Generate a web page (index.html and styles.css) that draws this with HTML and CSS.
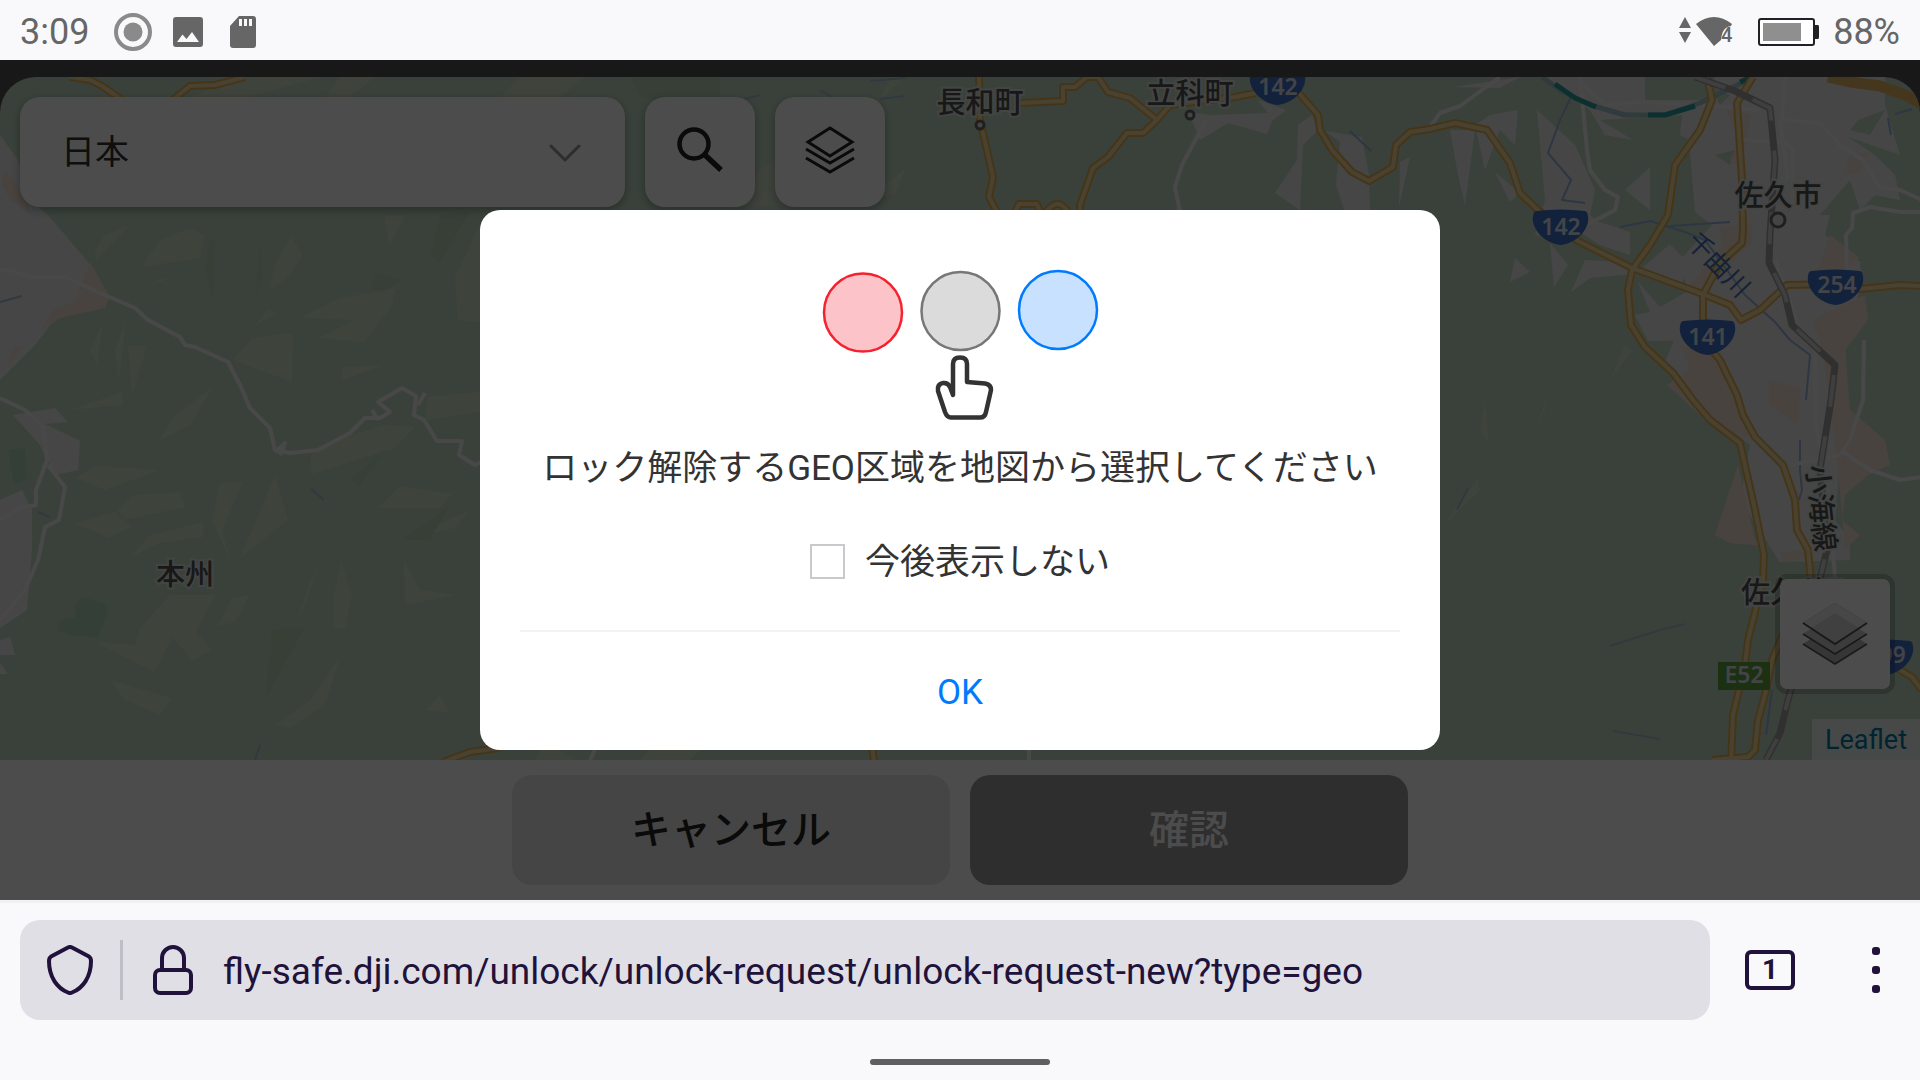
FILE: index.html
```html
<!DOCTYPE html>
<html lang="ja">
<head>
    <meta charset="UTF-8">
    <meta name="viewport" content="width=device-width, initial-scale=1.0">
    <title>GEO区域のロック解除</title>
    <link rel="stylesheet" href="styles.css">
</head>
<body>
    <!-- Status bar -->
    <header class="status-bar">
        <div class="status-left">
            <span class="clock">3:09</span>
            <svg class="icon-record" width="38" height="38" viewBox="0 0 38 38">
                <circle cx="19" cy="19" r="17" fill="none" stroke="#8a8a8a" stroke-width="4"/>
                <circle cx="19" cy="19" r="9.5" fill="#8a8a8a"/>
            </svg>
            <svg class="icon-image" width="30" height="30" viewBox="0 0 30 30">
                <path fill="#666" fill-rule="evenodd" d="M3 0H27Q30 0 30 3V27Q30 30 27 30H3Q0 30 0 27V3Q0 0 3 0ZM4 25H26L19 15L13.500 22L9.500 17.500Z"/>
            </svg>
            <svg class="icon-sd" width="28" height="32" viewBox="0 0 28 32">
                <path fill="#666" fill-rule="evenodd" d="M10 0H24Q27 0 27 3V29Q27 32 24 32H4Q1 32 1 29V10ZM10 3V10H13V3ZM15 3V10H18V3ZM20 3V10H23V3Z"/>
            </svg>
        </div>
        <div class="status-right">
            <svg width="56" height="32" viewBox="0 0 56 32">
                <path fill="#666" d="M6 1L12 12H0ZM6 27L12 16H0Z"/>
                <path fill="#666" d="M17 8Q35 -6 53 8L52 10Q43 11 42 24L35 30Z"/>
                <text x="42" y="26" class="wifi-num">4</text>
            </svg>
            <svg class="icon-battery" width="62" height="28" viewBox="0 0 62 28">
                <rect x="1" y="1" width="55" height="26" rx="2" fill="#fff" stroke="#202124" stroke-width="2"/>
                <rect x="5" y="5" width="38" height="18" fill="#8f8f8f"/>
                <path fill="#202124" d="M56 7H60Q61 7 61 9V19Q61 21 60 21H56Z"/>
            </svg>
            <span>88%</span>
        </div>
    </header>

    <!-- Web page -->
    <main class="page">
        <div class="map">
            <svg class="map-canvas" viewBox="0 77 1920 683" preserveAspectRatio="xMidYMid slice">
                <defs>
                    <path id="shield" d="M3 1Q28 -2 52 1Q56 2 55 12C52 26 38 34 27.500 35C17 34 3 26 0 12Q-1 2 3 1Z"/>
                    <path id="railway" d="M1695 77L1735 91L1770 108L1775 160L1770 235L1769 263L1785 295L1792 325L1835 365L1831 400L1820 470L1827 550L1805 640L1788 700L1780 733L1766 760"/>
                    <g id="highways">
                        <path d="M979 77L980 120L983 133L993 177L989 197L997 212"/>
                        <path d="M1020 103L1063 101V87H1075L1087 77H1098L1108 92L1130 98L1157 120"/>
                        <path d="M1256 93L1235 97L1170 105L1157 120L1143 133H1127L1108 157L1093 168L1080 205V212"/>
                        <path d="M1015 212L1019 204H1037L1040 212M1046 212Q1058 196 1068 212"/>
                        <path d="M1290 80L1298 92L1318 115L1320 130L1332 150L1352 172L1369 181L1393 167L1396 145L1410 132L1430 129L1455 123L1487 130L1510 163L1520 193L1538 210L1578 241L1632 268L1700 293L1730 305L1741 320L1760 310L1787 285L1835 284L1860 289L1900 285L1920 286"/>
                        <path d="M1707 77L1712 100L1700 130L1675 165L1668 215L1650 245L1632 270L1628 290L1631 325L1645 347L1673 373L1693 400L1710 420L1740 443L1755 510L1764 555L1763 580L1748 640L1745 665L1733 715L1731 762"/>
                        <path d="M1753 77L1737 103L1742 180L1743 230L1742 243L1720 263L1703 295V340L1720 360L1737 395L1743 415L1755 437L1783 465L1795 500L1797 530L1808 550L1812 590L1785 630L1772 660L1765 695L1758 720L1755 750L1748 757L1712 760"/>
                        <path d="M70 77L90 80L102 86L125 102M170 102L190 86L215 85L245 77"/>
                        <path d="M443 762L470 752L500 748M872 745L874 762"/>
                        <path d="M1880 655L1900 670L1912 677L1922 690"/>
                    </g>
                </defs>
                <rect y="77" width="1920" height="683" fill="#c0dbc3"/>

                <!-- terrain shading -->
                <g fill="#d0dfc8">
                    <path d="M240 77L320 77L250 97H190ZM340 77H375L350 97H325ZM520 77H585L560 97H500ZM650 80L690 77L668 97Z"/>
                    <path d="M142 267L160 240L190 228L205 235L200 258ZM270 290L275 265L291 237L303 255L285 280ZM300 318L340 298L395 289L393 303L365 342L318 338L355 320Z"/>
                    <path d="M233 360L252 338L293 333L292 382ZM160 440L175 415L213 387L190 425ZM70 410L122 392L123 405ZM90 350L103 322L97 365ZM115 350L126 320L119 380ZM128 346H147L132 395ZM75 478L95 466L160 470L105 490Z"/>
                    <path d="M212 520L220 483L243 482L222 530L230 560ZM240 558L275 475L288 520ZM118 510L133 495L180 492L185 507L125 520ZM75 523L115 512L132 527L108 538ZM130 557L150 535L203 522V537L160 543Z"/>
                    <path d="M170 595H215L196 632L212 650L192 661L173 637L154 672L95 642L135 645L140 628ZM110 680L172 698L160 715L125 700ZM275 725L310 700L340 657L325 705L290 728ZM298 618L307 590L320 560L303 610ZM333 600L341 562L352 595L345 628H334Z"/>
                    <path d="M378 508L400 486L452 494L440 508ZM402 540L470 510L455 528ZM404 560L420 590L455 595L405 605ZM428 397L480 392V412L425 420ZM310 455L350 435L385 425L415 427L395 448L312 474ZM342 380V367L385 365ZM455 277L480 225V322L458 320ZM384 215H405L390 245Z"/>
                    <path d="M160 280L180 275L140 289ZM95 250L105 235L130 225L96 260ZM255 325L268 309L278 313ZM218 626L232 598L250 595L235 622ZM425 710L440 695L450 713Z"/>
                    <path d="M735 205L760 170L790 150L785 195L800 207ZM870 197L890 180L905 170L895 195ZM880 100L905 77H890ZM1480 430L1485 400L1489 445ZM1533 435L1548 395L1545 410ZM1442 527L1478 478L1480 490ZM1610 380L1625 345L1633 350ZM540 750H560L575 760H535ZM650 750H700L690 760H640Z"/>
                </g>
                <g fill="#b8d3ba">
                    <path d="M205 270L210 240H215L213 300ZM260 240L262 280L255 302ZM370 290L375 272L403 280L385 290ZM402 540L450 505L430 540ZM350 480L385 450L360 487ZM265 700L272 630L305 627ZM430 255L440 215L470 212L440 262ZM630 77H720V115L640 97Z"/>
                    <path fill="#b0d2b8" d="M75 605L82 597L105 603L108 612L98 637L72 636L58 630L60 620L75 618ZM8 450L25 448L28 478L14 485Z"/>
                </g>

                <!-- built-up areas -->
                <g fill="#e9ebee">
                    <path d="M0 135L18 160L30 200L48 215L88 262L100 290L60 312L35 345L5 375L0 380Z"/>
                    <path d="M13 415L55 408L68 422L45 424L80 441L78 470L55 475L40 445ZM0 500L22 490L32 510V550L27 610L0 628ZM0 640L10 637L15 655H0ZM0 663L8 674H0Z"/>
                    <path d="M1188 112L1210 115L1268 113L1258 100L1286 110L1272 121L1267 134L1228 123L1200 140L1194 125Z"/>
                    <path d="M1298 125L1312 115L1318 130L1303 145L1300 210L1275 193L1297 160ZM1325 131L1362 137L1369 175L1370 212H1345L1336 185L1340 142ZM1400 162L1410 157L1399 207Z"/>
                    <path d="M1453 87L1520 77L1500 88ZM1450 130L1475 130L1465 205L1458 175ZM1475 125L1485 170L1500 130L1515 145L1518 110L1490 115ZM1495 172L1520 193L1510 202ZM1537 110L1575 145L1595 190L1590 215L1620 240L1580 220L1560 240L1535 235L1545 200Z"/>
                    <path d="M1630 232V255L1600 245L1580 232L1600 222ZM1550 243L1568 265L1554 287ZM1585 260L1620 262L1635 275L1622 275L1590 278L1571 292ZM1640 270L1670 244L1690 265L1680 288ZM1638 282L1660 307L1690 290L1690 340L1648 341L1635 315L1650 312Z"/>
                    <path d="M1545 77H1645V100H1715L1690 140L1680 135L1682 115L1600 120L1633 140L1605 135L1590 110ZM1625 190L1650 167V210ZM1510 282L1515 258L1530 272Z"/>
                    <path d="M1690 150L1715 77L1885 77L1885 105L1900 155L1848 137L1875 155L1895 175L1900 200L1875 195L1860 210L1850 180L1820 215H1830L1825 235L1860 262L1862 280L1845 345L1850 420L1840 460L1835 520L1850 540V560L1780 562L1740 500L1750 445L1700 405L1665 362L1690 300L1680 260L1712 225L1695 212Z"/>
                </g>
                <g fill="#c0dbc3">
                    <path d="M1850 130L1858 120L1885 110L1870 135ZM1715 155L1735 150L1730 165ZM1710 85L1730 95L1720 105Z"/>
                </g>
                <g fill="#f0dfd0">
                    <path d="M90 262L110 297L105 308L60 318L42 330L52 310L75 302L83 280ZM5 170L25 195L32 215L10 200L2 185ZM15 345L22 348L8 368L10 355Z"/>
                    <path d="M1720 228L1752 224V243L1725 268L1700 300L1690 285L1722 245ZM1830 235L1860 258L1835 275L1818 270ZM1812 320L1865 295L1868 320L1845 350L1850 410L1885 440L1890 465L1868 475L1845 495L1842 520L1860 535L1845 550L1838 470L1830 400L1820 340Z"/>
                    <path d="M1680 345L1720 355L1738 400L1750 440L1700 415L1667 385L1690 370ZM1738 465L1755 540L1765 546L1730 543L1715 535ZM1768 380L1800 388L1798 425L1770 405ZM1725 108L1750 115L1742 170L1730 160L1740 140ZM1850 155L1870 152L1860 172L1843 175ZM1780 552L1808 550V558L1782 562Z"/>
                </g>

                <!-- rivers -->
                <g class="river">
                    <path d="M1572 95L1560 120L1548 153L1571 180L1562 200L1585 203M1620 227L1650 221L1685 232L1705 240L1745 295L1775 322L1790 340L1810 355L1806 400M1800 440V470L1802 490L1799 500M1670 226L1730 222"/>
                    <path d="M1350 131L1371 151M1888 118L1891 135M1895 114L1912 109M1772 690L1766 735"/>
                </g>
                <g class="stream">
                    <path d="M0 302L22 296M38 512L50 517M311 489L324 500M1610 646L1660 630L1685 624M1613 731L1660 739M1457 510L1468 488M255 760L260 745M745 99L760 95M820 90L840 102M870 81L905 78M880 99L905 96"/>
                </g>

                <!-- minor roads -->
                <g class="road-minor">
                    <path d="M0 270H10L30 277H65L100 293L135 308L148 320L180 337L185 345L195 347L228 362L240 385L250 408L270 428L275 450L290 453L318 450L350 433L365 418L380 418L390 412L378 402L402 388L416 396L414 415L424 420L437 441H462L459 455L475 465L485 460"/>
                    <path d="M0 398L25 410L43 427L47 460L36 490V505L20 508L0 520M48 465L65 487L59 520L45 527L38 560L25 590L0 620"/>
                    <path d="M275 452L285 443L280 455M372 410L378 420M418 405L425 393"/>
                    <path d="M1206 120L1198 135L1182 165L1175 187L1180 212M590 760L595 750M1029 750V760"/>
                    <path d="M1500 77L1460 106L1440 113L1430 127M1580 77L1587 150L1590 170L1605 190L1618 197L1615 210L1592 222L1570 240M1580 82L1605 105L1640 102L1700 105L1760 110M1785 77L1782 120L1820 123L1840 145L1863 160L1880 188L1900 190L1922 200M1740 140L1785 142L1793 150L1793 210M1922 212H1900L1870 207L1853 213L1852 228L1846 235L1847 275M1864 340L1863 400L1850 440L1840 455L1790 465M1843 452L1870 470L1900 480L1922 477M1780 120L1788 180M1775 260L1800 330L1815 350L1815 420L1830 500L1835 580"/>
                </g>

                <path class="shinkansen-base" d="M1542 77L1560 90L1590 105L1625 115L1665 115L1700 103L1752 78"/>
                <path class="shinkansen" d="M1555 84L1575 98L1596 107M1648 115H1665L1695 106M1740 82L1752 77"/>

                <use href="#highways" class="road-case"/>
                <use href="#highways" class="road-fill"/>
                <path class="expressway" d="M1828 77L1850 82L1880 86L1905 95L1922 104"/>

                <!-- railway -->
                <use href="#railway" class="rail"/>
                <use href="#railway" class="rail-dash"/>

                <!-- road shields -->
                <g fill="#3f73c8">
                    <use href="#shield" x="1250" y="70"/>
                    <use href="#shield" x="1533" y="210"/>
                    <use href="#shield" x="1808" y="270"/>
                    <use href="#shield" x="1680" y="320"/>
                    <use href="#shield" x="1858" y="640"/>
                </g>
                <rect x="1718" y="662" width="52" height="28" fill="#5ea03c"/>
                <g class="shield-text">
                    <text x="1278" y="95">142</text>
                    <text x="1561" y="235">142</text>
                    <text x="1837" y="293">254</text>
                    <text x="1708" y="345">141</text>
                    <text x="1886" y="663">299</text>
                    <text x="1744" y="683">E52</text>
                </g>

                <!-- places -->
                <g class="place">
                    <text x="980" y="113">長和町</text>
                    <text x="1190" y="104">立科町</text>
                    <text x="1778" y="206">佐久市</text>
                    <text x="1799" y="603">佐久穂町</text>
                    <text x="185" y="585">本州</text>
                    <text transform="translate(1821 508) rotate(84)" y="10">小海線</text>
                </g>
                <text class="river-name" transform="translate(1719 264) rotate(46)" y="10">千曲川</text>
                <g class="place-dot">
                    <circle cx="980" cy="125" r="4"/>
                    <circle cx="1190" cy="115" r="4"/>
                    <circle cx="1778" cy="220" r="7"/>
                </g>
            </svg>

            <div class="toolbar">
                <div class="region">
                    <select class="region-select" aria-label="地域">
                        <option>日本</option>
                    </select>
                    <svg class="region-arrow" width="32" height="20" viewBox="0 0 32 20">
                        <path d="M2 3L16 17L30 3" fill="none" stroke="#969799" stroke-width="3" stroke-linecap="round"/>
                    </svg>
                </div>
                <button type="button" class="tool-button" aria-label="検索">
                    <svg width="46" height="46" viewBox="0 0 46 46" fill="none" stroke="#222">
                        <circle cx="17" cy="17" r="14.500" stroke-width="4.500"/>
                        <path d="M28 28L44 43" stroke-width="5.500"/>
                    </svg>
                </button>
                <button type="button" class="tool-button" aria-label="レイヤー">
                    <svg width="50" height="48" viewBox="0 0 50 48" fill="none" stroke="#222" stroke-width="3">
                        <path d="M25 2L47 16L25 30L3 16ZM1 23L25 37L49 23M1 32L25 46L49 32"/>
                    </svg>
                </button>
            </div>

            <div class="map-corner">
                <button type="button" class="layers-control" aria-label="Layers">
                    <svg width="66" height="64" viewBox="0 0 66 64">
                        <path fill="#b4b4b4" d="M33 21L65 42L33 62L1 42Z"/>
                        <path fill="none" stroke="#555" stroke-width="1.500" d="M1 42L33 62L65 42"/>
                        <path fill="#c8c8c8" d="M33 11L65 32L33 52L1 32Z"/>
                        <path fill="none" stroke="#555" stroke-width="1.500" d="M1 32L33 52L65 32"/>
                        <path fill="#efefef" stroke="#dcdcdc" d="M33 1L65 21L33 42L1 21Z"/>
                        <path fill="#d8d8d8" d="M33 11L57 26L33 42L9 26Z"/>
                        <path fill="none" stroke="#555" stroke-width="2" d="M1 21L33 42L65 21"/>
                    </svg>
                </button>
                <div class="attribution"><a href="#">Leaflet</a></div>
            </div>
        </div>

        <div class="actions">
            <button type="button" class="action cancel">キャンセル</button>
            <button type="button" class="action confirm">確認</button>
        </div>

        <!-- Modal -->
        <div class="overlay">
            <div class="dialog" role="dialog" aria-modal="true">
                <svg class="dialog-art" width="280" height="154" viewBox="820 268 280 154">
                    <g stroke-width="2.500">
                        <circle cx="863" cy="312.500" r="39" fill="#fcc4c8" stroke="#f5222d"/>
                        <circle cx="960.500" cy="311" r="39" fill="#dbdbdb" stroke="#777"/>
                        <circle cx="1058" cy="310" r="39" fill="#c8e1ff" stroke="#007bff"/>
                    </g>
                    <path fill="none" stroke="#333" stroke-width="4.500" stroke-linecap="round" stroke-linejoin="round" d="M953 395V364Q953 357.500 960 357.500Q967 357.500 967 364V382L985 383.500Q991 384.500 991 390L986 412Q985 417.500 980 417.500H951Q947 417.500 945 412L938 391Q937 384 943 383Q948 382.500 950 387Z"/>
                </svg>
                <p class="dialog-text">ロック解除するGEO区域を地図から選択してください</p>
                <label class="dialog-check">
                    <input type="checkbox">
                    <span>今後表示しない</span>
                </label>
                <button type="button" class="dialog-ok">OK</button>
            </div>
        </div>
    </main>

    <!-- Browser bar -->
    <footer class="browser">
        <div class="browser-row">
            <div class="url-box">
                <svg class="icon-shield" width="46" height="50" viewBox="0 0 46 50" fill="none" stroke="#20123a" stroke-width="4" stroke-linejoin="round">
                    <path d="M21 2.500Q23 1.500 25 2.500L42 11.500Q44 13 44 16C44 32 36 43 25 47.500Q23 48.500 21 47.500C10 43 2 32 2 16Q2 13 4 11.500Z"/>
                </svg>
                <span class="url-divider"></span>
                <svg class="icon-lock" width="40" height="50" viewBox="0 0 40 50" fill="none" stroke="#20123a" stroke-width="4">
                    <rect x="2" y="25" width="36" height="23" rx="5"/>
                    <path d="M9 25V13A11 11 0 0 1 31 13V25"/>
                </svg>
                <input type="text" class="url-input" aria-label="URL" value="fly-safe.dji.com/unlock/unlock-request/unlock-request-new?type=geo">
            </div>
            <button type="button" class="tab-count">1</button>
            <button type="button" class="menu" aria-label="メニュー">
                <svg width="10" height="48" viewBox="0 0 10 48" fill="#20123a">
                    <rect x="1" y="1" width="8" height="8" rx="3"/>
                    <rect x="1" y="20" width="8" height="8" rx="3"/>
                    <rect x="1" y="39" width="8" height="8" rx="3"/>
                </svg>
            </button>
        </div>
        <div class="home-bar"></div>
    </footer>
</body>
</html>
```

FILE: styles.css
```css
* {
    box-sizing: border-box;
}

body {
    margin: 0;
    height: 100vh;
    display: flex;
    flex-direction: column;
    overflow: hidden;
    background: #f9f9fb;
    font-family: Roboto, "Noto Sans CJK JP", sans-serif;
}

button, input, select {
    font-family: inherit;
    border: none;
    padding: 0;
}

svg {
    display: block;
    flex: none;
}

/* Status bar */
.status-bar {
    height: 60px;
    padding: 3px 20px 0;
    display: flex;
    justify-content: space-between;
    align-items: center;
    color: #666;
    font-size: 36px;
}

.status-left, .status-right {
    display: flex;
    align-items: center;
}

.clock {
    margin-right: 25px;
}

.icon-record {
    margin-right: 21px;
}

.icon-image {
    margin-right: 26px;
}

.icon-battery {
    margin: 0 13px 0 23px;
}

.wifi-num {
    font-size: 20px;
    font-weight: 500;
    fill: #666;
}

/* Page */
.page {
    flex: 1;
    min-height: 0;
    position: relative;
    display: flex;
    flex-direction: column;
    padding-top: 17px;
    background: #505050;
}

.map {
    flex: 1;
    min-height: 0;
    position: relative;
    overflow: hidden;
    border-radius: 36px 36px 0 0;
}

.map-canvas {
    position: absolute;
    width: 100%;
    height: 100%;
}

.road-minor, .river, .stream, .road-case, .road-fill, .expressway,
.rail, .rail-dash, .shinkansen, .shinkansen-base {
    fill: none;
    stroke-linejoin: round;
}

.road-minor {
    stroke: #f2f0f2;
    stroke-width: 4px;
}

.river {
    stroke: #98b4dc;
    stroke-width: 2px;
}

.stream {
    stroke: #a6c0d4;
    stroke-width: 2px;
}

.road-case {
    stroke: #e8b250;
    stroke-width: 8px;
}

.road-fill {
    stroke: #f6dca6;
    stroke-width: 4px;
}

.expressway {
    stroke: #e8b664;
    stroke-width: 11px;
}

.shinkansen-base {
    stroke: #a5c4c8;
    stroke-width: 5px;
}

.shinkansen {
    stroke: #2a9ea2;
    stroke-width: 5px;
}

.rail {
    stroke: #a0a0a0;
    stroke-width: 7px;
}

.rail-dash {
    stroke: #d4d4d4;
    stroke-width: 4px;
    stroke-dasharray: 32px 30px;
}

.shield-text {
    fill: #dce4f0;
    font: 600 23px "Noto Sans", sans-serif;
    text-anchor: middle;
}

.place {
    fill: #505050;
    stroke: #e2e6e2;
    stroke-width: 4px;
    paint-order: stroke;
    font: 500 29px "Noto Sans CJK JP", sans-serif;
    text-anchor: middle;
}

.river-name {
    fill: #4574b8;
    font: 26px "Noto Sans CJK JP", sans-serif;
    text-anchor: middle;
}

.place-dot {
    fill: #e4e4e4;
    stroke: #686868;
    stroke-width: 3px;
}

.toolbar {
    position: relative;
    display: flex;
    gap: 20px;
    padding: 20px;
}

.region {
    position: relative;
    width: 605px;
}

.region-select {
    appearance: none;
    width: 100%;
    height: 110px;
    padding: 0 41px;
    border-radius: 20px;
    background: #fff;
    box-shadow: 0 3px 10px rgba(0, 0, 0, 0.3);
    color: #323233;
    font-size: 34px;
}

.region-arrow {
    position: absolute;
    right: 44px;
    top: 46px;
    pointer-events: none;
}

.tool-button {
    width: 110px;
    height: 110px;
    display: flex;
    justify-content: center;
    align-items: center;
    padding-bottom: 4px;
    border-radius: 20px;
    background: #fff;
    box-shadow: 0 3px 10px rgba(0, 0, 0, 0.3);
}

.map-corner {
    position: absolute;
    right: 0;
    bottom: 0;
    display: flex;
    flex-direction: column;
    align-items: flex-end;
    gap: 25px;
}

.layers-control {
    width: 120px;
    height: 120px;
    margin-right: 25px;
    display: flex;
    justify-content: center;
    align-items: center;
    border: 5px solid rgba(0, 0, 0, 0.2);
    border-radius: 12px;
    background: #fff;
    background-clip: padding-box;
}

.attribution {
    padding: 1px 13px 0;
    background: rgba(255, 255, 255, 0.7);
    font-size: 27px;
    line-height: 40px;
}

.attribution a {
    color: #0078a8;
    text-decoration: none;
}

.actions {
    display: flex;
    justify-content: center;
    gap: 20px;
    padding: 15px 20px;
    background: #fff;
}

.action {
    width: 438px;
    height: 110px;
    padding-bottom: 6px;
    border-radius: 20px;
    font-size: 40px;
    font-weight: 500;
}

.cancel {
    background: #e6e6e6;
    color: #222;
}

.confirm {
    background: #999;
    color: #fff;
}

/* Modal */
.overlay {
    position: absolute;
    inset: 0;
    display: flex;
    justify-content: center;
    align-items: center;
    background: rgba(0, 0, 0, 0.7);
}

.dialog {
    width: 960px;
    padding: 58px 40px 0;
    display: flex;
    flex-direction: column;
    align-items: center;
    border-radius: 20px;
    background: #fff;
    color: #333;
    font-size: 35px;
    line-height: 50px;
}

.dialog-text {
    margin: 22px 0 42px;
}

.dialog-check {
    display: flex;
    align-items: center;
    gap: 20px;
    margin-bottom: 44px;
}

.dialog-check input {
    appearance: none;
    width: 35px;
    height: 35px;
    margin: 0;
    border: 2px solid #c8c9cc;
    background: #fff;
}

.dialog-check span {
    padding-top: 4px;
    line-height: 46px;
}

.dialog-ok {
    width: 100%;
    height: 120px;
    padding-top: 2px;
    border-top: 2px solid #f2f3f5;
    background: none;
    color: #007bff;
    font-size: 35px;
}

/* Browser bar */
.browser {
    height: 180px;
    border-top: 3px solid #f0f0f4;
}

.browser-row {
    display: flex;
    align-items: center;
    padding: 17px 39px 0 20px;
}

.url-box {
    flex: 1;
    height: 100px;
    display: flex;
    align-items: center;
    padding: 0 27px;
    border-radius: 20px;
    background: #e0dfe6;
}

.url-divider {
    width: 3px;
    height: 60px;
    margin: 0 30px 0 27px;
    background: #bfbec8;
}

.url-input {
    flex: 1;
    margin-left: 30px;
    padding-top: 2px;
    background: none;
    color: #20123a;
    font-size: 37px;
}

.tab-count {
    width: 50px;
    height: 40px;
    margin: 0 76px 0 35px;
    border: 4px solid #20123a;
    border-radius: 6px;
    background: none;
    color: #20123a;
    font-size: 28px;
    font-weight: 700;
    line-height: 32px;
}

.menu {
    background: none;
}

.home-bar {
    width: 180px;
    height: 6px;
    margin: 39px auto 0;
    border-radius: 3px;
    background: #5f5f60;
}
```
